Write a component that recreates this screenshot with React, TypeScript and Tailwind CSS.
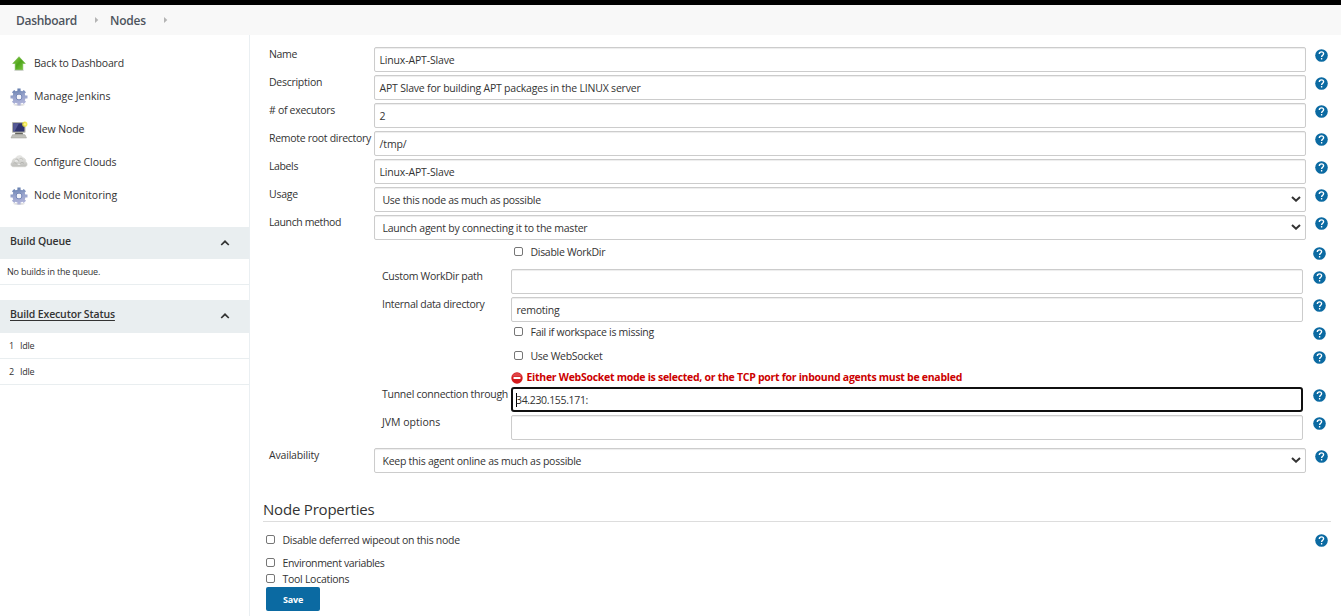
import type { ReactNode } from "react";

function Help() {
  return (
    <svg viewBox="0 0 15 15" className="size-[15px] shrink-0">
      <circle cx="7.5" cy="7.5" r="6.300" fill="#0b6aa2" />
      <path
        fill="none"
        stroke="#fff"
        strokeWidth="1.350"
        d="M5.300 6.100C5.300 4.700 6.200 3.900 7.500 3.900s2.100.8 2.100 1.900c0 1.500-2 1.600-2 3.300M7.600 10.100v1.400"
      />
    </svg>
  );
}

function Gear() {
  return (
    <svg viewBox="0 0 18 18" className="size-[18px]">
      <defs>
        <linearGradient id="gear" gradientUnits="userSpaceOnUse" x1="7" y1="0" x2="11" y2="18">
          <stop offset="0" stopColor="#5f7aab" />
          <stop offset="0.45" stopColor="#97a3cb" />
          <stop offset="1" stopColor="#b4b6dc" />
        </linearGradient>
      </defs>
      <ellipse cx="9" cy="16.800" rx="6" ry="0.900" fill="#000" opacity="0.150" />
      <g fill="none" stroke="url(#gear)">
        <circle cx="9" cy="9" r="4.500" strokeWidth="4.200" />
        <path strokeWidth="3.200" d="M9 .4L9.010 4M9 14L9.010 17.400M.5 9L4 9.010M14 9L17.500 9.010M3.100 3.100L5.500 5.500M12.500 12.500L14.900 14.900M14.900 3.100L12.500 5.500M3.100 14.900L5.500 12.500" />
      </g>
      <circle cx="9" cy="9" r="2.900" fill="none" stroke="#7183b4" strokeWidth="0.900" />
      <circle cx="9" cy="9" r="2.200" fill="#f4f5fa" />
    </svg>
  );
}

function UpArrow() {
  return (
    <svg viewBox="0 0 18 18" className="size-[18px]">
      <defs>
        <linearGradient id="up" x1="0" y1="0" x2="1" y2="1">
          <stop offset="0" stopColor="#8ed04e" />
          <stop offset="0.5" stopColor="#4fa51c" />
          <stop offset="1" stopColor="#80cf42" />
        </linearGradient>
      </defs>
      <ellipse cx="9" cy="15.200" rx="5" ry="0.900" fill="#000" opacity="0.15" />
      <path d="M9 1.700L15.300 8.500H12.800V14.700H5.200V8.500H2.700z" fill="url(#up)" stroke="#6fb545" strokeWidth="0.600" />
    </svg>
  );
}

function Computer() {
  return (
    <svg viewBox="0 0 18 18" className="size-[18px]">
      <rect x="2" y="1" width="13.500" height="10.800" rx="0.800" fill="#b4b4ac" />
      <path d="M3.200 2.200h11.200v8.400H3.200z" fill="#30346f" />
      <path d="M3.200 2.200H9L4.500 10.600H3.200z" fill="#565a96" />
      <path d="M5.500 11.800h7l1 1.700h-9z" fill="#66665f" />
      <path d="M2.500 13.700h12.500l1.500 3.300H1z" fill="#c0c0ba" stroke="#9c9c96" strokeWidth="0.500" />
      <circle cx="14.800" cy="3.200" r="2.600" fill="#f2e93b" opacity="0.850" />
      <circle cx="14.800" cy="3.200" r="1.200" fill="#fff68a" />
    </svg>
  );
}

function Cloud() {
  return (
    <svg viewBox="0 1.2 18 18" className="size-[18px]">
      <defs>
        <linearGradient id="cloud" x1="0" y1="0" x2="0" y2="1">
          <stop offset="0" stopColor="#ececea" />
          <stop offset="1" stopColor="#bdbdb9" />
        </linearGradient>
      </defs>
      <path
        fill="url(#cloud)"
        stroke="#d0d0cd"
        strokeWidth="0.500"
        d="M3 14C.5 13.500.3 10.500 2 9.500 1.800 6.800 4 5.300 5.500 5.800 6.300 2.500 11.500 1.800 13 5c2 .3 3 2 2.700 4C18 10.300 17.500 13.800 15 14z"
      />
      <path d="M5.500 6.500c2-.8 3.200.3 3.300 2M9.500 6c1.500-1 3-.5 3.300.8M3.500 10.500c1.200-1 2.700-.5 3 .8M10 11c.8-1.800 3-1.800 4-.3" fill="none" stroke="#aaaaa6" strokeWidth="0.700" />
      <path d="M8 12c.5-1 1.500-1 2 0M5 8.500c1-.8 2-.5 2.500.3" fill="none" stroke="#fff" strokeWidth="0.900" />
    </svg>
  );
}

function Task({ icon, children, tracking }: { icon: ReactNode; children: string; tracking: string }) {
  return (
    <a className="flex h-[33px] items-center gap-[6px] pl-[10px]">
      {icon}
      <span className={`pb-[2px] ${tracking}`}>{children}</span>
    </a>
  );
}

function Chevron() {
  return (
    <svg viewBox="0 0 10 6" className="mb-px h-[6px] w-[10px]">
      <path d="M1.200 5L5 1.300 8.800 5" fill="none" stroke="#333" strokeWidth="1.700" />
    </svg>
  );
}

function Crumb() {
  return (
    <svg viewBox="0 0 4 6" className="h-[6px] w-[4px]">
      <path d="M0 0L3.300 3L0 6z" fill="#b4b4b4" />
    </svg>
  );
}

function Check({ children, tracking }: { children: string; tracking: string }) {
  return (
    <label className="flex items-center gap-[7.5px]">
      <span role="checkbox" aria-checked="false" className="mb-[2px] size-[9px] shrink-0 rounded-[2px] border border-[#767676] bg-white" />
      <span className={tracking}>{children}</span>
    </label>
  );
}

function Box({ children, tracking = "", focus = false }: { children?: string; tracking?: string; focus?: boolean }) {
  return (
    <div
      role="textbox"
      className={
        focus
          ? "flex h-[25px] grow items-center rounded-[3px] border-2 border-[#101010] pl-[3px]"
          : "flex h-[25px] grow items-center rounded-[2px] border border-[#ccc] pl-[4.5px] shadow-[inset_0_1px_1px_rgba(0,0,0,0.075)]"
      }
    >
      {focus && <span className="-mr-px h-[14px] w-px bg-black" />}
      <span className={`pt-px ${tracking}`}>{children}</span>
    </div>
  );
}

function Select({ children, tracking }: { children: string; tracking: string }) {
  return (
    <div
      role="combobox"
      className="flex h-[25px] grow items-center justify-between rounded-[2px] border border-[#ccc] pr-[4px] pl-[7.5px] shadow-[inset_0_1px_1px_rgba(0,0,0,0.075)]"
    >
      <span className={`pt-px ${tracking}`}>{children}</span>
      <svg viewBox="0 0 10 6" className="mb-[2px] h-[6px] w-[10px]">
        <path d="M1 1l4 3.700L9 1" fill="none" stroke="#333" strokeWidth="2" />
      </svg>
    </div>
  );
}

function Row({ label, tracking, children }: { label: string; tracking: string; children: ReactNode }) {
  return (
    <div className="flex h-[28px] items-start pr-[12px] pl-[19px]">
      <div className={`w-[105px] shrink-0 ${tracking}`}>{label}</div>
      {children}
      <div className="ml-[8px] pt-px">
        <Help />
      </div>
    </div>
  );
}

function SubRow({ label, tracking, children }: { label: string; tracking: string; children: ReactNode }) {
  return (
    <div className="flex h-[28px] items-start pr-[14px] pl-[132px]">
      <div className={`w-[129px] shrink-0 ${tracking}`}>{label}</div>
      {children}
      <div className="ml-[9px] pt-px">
        <Help />
      </div>
    </div>
  );
}

function SubCheck({ label, tracking }: { label: string; tracking: string }) {
  return (
    <div className="flex h-[24px] items-start justify-between pr-[14px] pl-[264px]">
      <Check tracking={tracking}>{label}</Check>
      <div className="pt-px">
        <Help />
      </div>
    </div>
  );
}

export default function App() {
  return (
    <div className="h-[616px] w-[1341px] overflow-hidden bg-white font-['Open_Sans','Noto_Sans',sans-serif] text-[10.5px] leading-[14px] whitespace-nowrap text-[#333]">
      <div className="h-[5px] bg-black" />
      <header className="flex h-[30px] items-center bg-[#f8f8f8] pl-[16px] text-[12px] font-semibold text-[#4d545d]">
        <span className="w-[79px] pt-[2px] tracking-[-0.290px]">Dashboard</span>
        <Crumb />
        <span className="ml-[11px] w-[54px] pt-[2px] tracking-[-0.190px]">Nodes</span>
        <Crumb />
      </header>
      <div className="flex h-[581px]">
        <aside className="w-[250px] shrink-0 border-r border-[#eaeff2]">
          <nav className="h-[192px] pt-[12px]">
            <Task icon={<UpArrow />} tracking="tracking-[-0.170px]">Back to Dashboard</Task>
            <Task icon={<Gear />} tracking="tracking-[-0.010px]">Manage Jenkins</Task>
            <Task icon={<Computer />} tracking="tracking-[-0.100px]">New Node</Task>
            <Task icon={<Cloud />} tracking="tracking-[-0.100px]">Configure Clouds</Task>
            <Task icon={<Gear />} tracking="tracking-[0px]">Node Monitoring</Task>
          </nav>
          <div className="flex h-[32px] items-center justify-between bg-[#e9eef0] pr-[19px] pl-[10px] font-semibold">
            <span className="-mt-[4px] tracking-[-0.130px]">Build Queue</span>
            <Chevron />
          </div>
          <div className="flex h-[26px] items-center border-b border-[#e9eef0] pl-[7px] text-[9px] tracking-[-0.190px]">No builds in the queue.</div>
          <div className="mt-[15px] flex h-[33px] items-center justify-between bg-[#e9eef0] pr-[19px] pl-[10px] font-semibold">
            <span className="-mt-[6px] tracking-[-0.150px] underline underline-offset-2">Build Executor Status</span>
            <Chevron />
          </div>
          {["1", "2"].map((n) => (
            <div key={n} className="flex h-[26px] items-center border-b border-[#e9eef0] pl-[9px] text-[9px]">
              <span className="w-[11px]">{n}</span>
              <span className="tracking-[-0.250px]">Idle</span>
            </div>
          ))}
        </aside>
        <main className="grow pt-[12px]">
          <Row label="Name" tracking="tracking-[-0.350px]">
            <Box tracking="tracking-[-0.160px]">Linux-APT-Slave</Box>
          </Row>
          <Row label="Description" tracking="tracking-[-0.270px]">
            <Box tracking="tracking-[-0.200px]">APT Slave for building APT packages in the LINUX server</Box>
          </Row>
          <Row label="# of executors" tracking="tracking-[-0.300px]">
            <Box>2</Box>
          </Row>
          <Row label="Remote root directory" tracking="tracking-[-0.290px]">
            <Box tracking="tracking-[-0.100px]">/tmp/</Box>
          </Row>
          <Row label="Labels" tracking="tracking-[-0.380px]">
            <Box tracking="tracking-[-0.160px]">Linux-APT-Slave</Box>
          </Row>
          <Row label="Usage" tracking="tracking-[-0.210px]">
            <Select tracking="tracking-[-0.280px]">Use this node as much as possible</Select>
          </Row>
          <Row label="Launch method" tracking="tracking-[-0.380px]">
            <Select tracking="tracking-[-0.230px]">Launch agent by connecting it to the master</Select>
          </Row>
          <div className="pt-[2px]">
            <SubCheck label="Disable WorkDir" tracking="tracking-[-0.300px]" />
            <SubRow label="Custom WorkDir path" tracking="tracking-[-0.290px]">
              <Box />
            </SubRow>
            <SubRow label="Internal data directory" tracking="tracking-[-0.300px]">
              <Box tracking="tracking-[-0.220px]">remoting</Box>
            </SubRow>
            <SubCheck label="Fail if workspace is missing" tracking="tracking-[-0.270px]" />
            <SubCheck label="Use WebSocket" tracking="tracking-[-0.280px]" />
            <div className="flex h-[14px] items-start gap-[3.5px] pl-[261px] font-bold text-[#c00]">
              <svg viewBox="0 0 12 12" className="-mt-px size-[12px]">
                <circle cx="6" cy="6" r="5.700" fill="#d31b1e" />
                <path d="M1 4.500a5.300 5.300 0 0 1 10 0z" fill="#e04547" />
                <rect x="2.500" y="4.900" width="7" height="2.200" rx="0.500" fill="#fff" />
              </svg>
              <span className="-mt-[3px] tracking-[-0.280px]">Either WebSocket mode is selected, or the TCP port for inbound agents must be enabled</span>
            </div>
            <SubRow label="Tunnel connection through" tracking="tracking-[-0.270px]">
              <Box focus tracking="tracking-[-0.340px]">34.230.155.171:</Box>
            </SubRow>
            <SubRow label="JVM options" tracking="tracking-[0px]">
              <Box />
            </SubRow>
          </div>
          <div className="pt-[5px]">
            <Row label="Availability" tracking="tracking-[-0.180px]">
              <Select tracking="tracking-[-0.250px]">Keep this agent online as much as possible</Select>
            </Row>
          </div>
          <h2 className="mt-[24px] mr-[10px] ml-[13px] h-[22px] border-b border-[#ddd] text-[15px] leading-[18px] tracking-[-0.200px]">Node Properties</h2>
          <div className="flex h-[26px] items-start justify-between pt-[11px] pr-[12px] pl-[16px]">
            <Check tracking="tracking-[-0.280px]">Disable deferred wipeout on this node</Check>
            <Help />
          </div>
          <div className="flex flex-col gap-[2px] pt-[8px] pl-[16px]">
            <Check tracking="tracking-[-0.360px]">Environment variables</Check>
            <Check tracking="tracking-[-0.280px]">Tool Locations</Check>
          </div>
          <button className="mt-px ml-[16px] block h-[24px] w-[54px] rounded-[2px] bg-[#0b6aa2] pt-px text-[9px] font-bold tracking-[-0.210px] text-white">Save</button>
        </main>
      </div>
    </div>
  );
}
